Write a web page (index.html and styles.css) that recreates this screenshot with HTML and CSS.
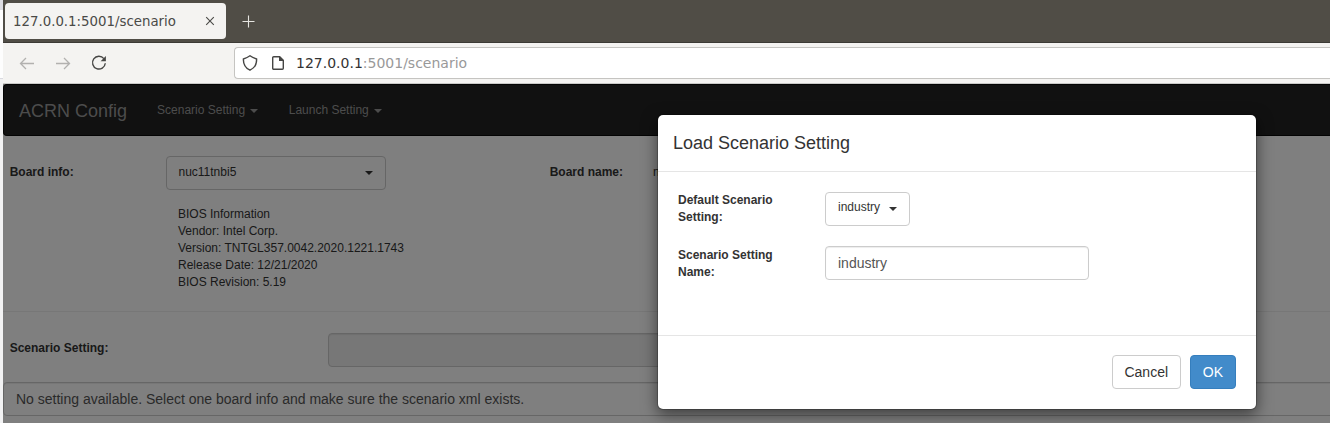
FILE: index.html
```html
<!DOCTYPE html>
<html lang="en">
<head>
<meta charset="utf-8">
<title>ACRN Config</title>
<link rel="stylesheet" href="styles.css">
</head>
<body>
<div class="screen">
  <div class="desktop-edge"></div>
  <div class="browser">
    <div class="tabs">
      <div class="tab"><span>127.0.0.1:5001/scenario</span>
        <svg class="tab-close" width="10" height="10" viewBox="0 0 10 10"><path d="M1.2 1.2l7.6 7.6M8.8 1.2L1.2 8.8"/></svg>
      </div>
      <svg class="new-tab" width="13" height="13" viewBox="0 0 13 13"><path d="M6.500 .5v12M.5 6.500h12"/></svg>
    </div>
    <div class="toolbar">
      <svg class="tool off" width="16" height="16" viewBox="0 0 16 16"><path d="M15 8.500H1.500M7 3L1.500 8.500L7 14"/></svg>
      <svg class="tool off" width="16" height="16" viewBox="0 0 16 16"><path d="M1 8.500H14.500M9 3L14.500 8.500L9 14"/></svg>
      <svg class="tool" width="16" height="16" viewBox="0 0 16 16"><path d="M12.9 3.6A6.4 6.4 0 1 0 14.3 8.3"/><path class="solid" d="M14.9 1v5.2H9.6z"/></svg>
      <div class="address">
        <svg class="tool" width="16" height="16" viewBox="0 0 16 16"><path d="M8 .8C6 2.300 4 3.200 1.400 4C1.200 9 3.500 13 8 15.200C12.500 13 14.800 9 14.600 4C12 3.200 10 2.300 8 .8z"/></svg>
        <svg class="tool" width="16" height="16" viewBox="0 0 16 16"><path d="M3.700 1.700h6l3.600 3.600v8a1 1 0 0 1-1 1H3.700a1 1 0 0 1-1-1v-10.600a1 1 0 0 1 1-1z"/><path class="solid" d="M9 1v5h5z"/></svg>
        <span class="url"><b>127.0.0.1</b>:5001/scenario</span>
      </div>
    </div>
    <main class="page">
      <nav class="navbar">
        <span class="brand">ACRN Config</span>
        <span class="nav-item">Scenario Setting<i class="caret"></i></span>
        <span class="nav-item">Launch Setting<i class="caret"></i></span>
      </nav>
      <section class="board">
        <label class="board-label">Board info:</label>
        <div class="board-value">
          <div class="select board-select"><span>nuc11tnbi5</span><i class="caret"></i></div>
          <div class="bios">BIOS Information<br>Vendor: Intel Corp.<br>Version: TNTGL357.0042.2020.1221.1743<br>Release Date: 12/21/2020<br>BIOS Revision: 5.19</div>
        </div>
        <label class="board-name">Board name:</label>
        <span class="name-value">nuc11tnbi5</span>
      </section>
      <section class="scenario">
        <label>Scenario Setting:</label>
        <div class="input readonly"></div>
      </section>
      <div class="input notice">No setting available. Select one board info and make sure the scenario xml exists.</div>
      <div class="backdrop"></div>
      <div class="modal">
        <h4 class="modal-title">Load Scenario Setting</h4>
        <div class="modal-body">
          <label>Default Scenario Setting:</label>
          <div class="select small-select"><span>industry</span><i class="caret"></i></div>
          <label class="name-label">Scenario Setting Name:</label>
          <div class="input name-input">industry</div>
        </div>
        <div class="modal-footer">
          <button class="btn cancel">Cancel</button>
          <button class="btn primary">OK</button>
        </div>
      </div>
    </main>
  </div>
</div>
</body>
</html>
```
FILE: styles.css
```css
* { box-sizing: border-box; }
body { margin: 0; overflow: hidden; }
.screen { width: 1330px; height: 423px; display: flex; overflow: hidden; }
.desktop-edge { width: 3px; flex: none; background: linear-gradient(#dcdce2 0 10px, #fdfdfd 10px 78px, #d9d9df 78px 79px, #f2f2f3 79px); }
.browser { width: 1327px; flex: none; display: flex; flex-direction: column; }

.tabs { height: 43px; flex: none; display: flex; align-items: flex-start; background: #504d46; border-bottom: 1px solid #3c3a35; padding: 3px 0 0 2px; font: 13.33px "DejaVu Sans", sans-serif; }
.tab { width: 221px; height: 36px; display: flex; align-items: center; justify-content: space-between; padding: 0 11px 0 8px; border-radius: 4px; background: #f4f3f1; color: #4a4a47; }
.tab-close, .new-tab { fill: none; stroke: #4a4a47; stroke-width: 1.1; }
.new-tab { margin: 12px 0 0 16px; stroke: #e6e5e1; stroke-width: 1.1; }

.toolbar { height: 41px; flex: none; display: flex; align-items: center; background: #f4f3f1; border-bottom: 1px solid #c9c9c7; padding-left: 16px; }
.tool { flex: none; fill: none; stroke: #464644; stroke-width: 1.4; margin-right: 20px; }
.tool.off { stroke: #b2b1af; stroke-width: 1.3; }
.solid { fill: #464644; stroke: none; }
.address { flex: 1; height: 32px; margin-left: 107px; display: flex; align-items: center; border: 1px solid #c5c4c1; border-right: 0; border-radius: 4px 0 0 4px; background: #fff; padding-left: 7px; }
.address .tool { margin-right: 12px; }
.url { font: 14px "DejaVu Sans", sans-serif; color: #999; margin-left: -2px; }
.url b { font-weight: 400; color: #333; }

.page { position: relative; height: 339px; overflow: hidden; background: #fff; font: 12px/17px "Liberation Sans", Arial, sans-serif; color: #333; }
.navbar { height: 52px; display: flex; align-items: center; background: #222; border: 1px solid #080808; border-right: 0; border-radius: 4px 0 0 4px; padding-left: 15px; color: #999; }
.brand { font-size: 18px; line-height: 20px; margin: 1px 30px 0 0; }
.nav-item { display: flex; align-items: center; margin: 0 30.600px 0 0; }
.caret { width: 0; height: 0; border: 4px solid transparent; border-top-color: currentColor; border-bottom: 0; margin: 2px 0 0 5px; }
label { font-weight: 700; }

.board { height: 176px; display: flex; padding: 20px 0 0 6.700px; border-bottom: 1px solid #eee; }
.board-label { width: 156.300px; padding-top: 8px; }
.board-value { width: 383.700px; }
.select { height: 34px; display: flex; align-items: flex-start; justify-content: space-between; border: 1px solid #ccc; border-radius: 4px; background: #fff; padding: 7px 12px; }
.select .caret { margin-top: 7px; }
.board-select { width: 220px; padding-left: 11.500px; }
.bios { padding: 16px 0 0 12px; }
.board-name { width: 103.300px; padding-top: 8px; }
.name-value { padding-top: 8px; }
.scenario { display: flex; height: 70px; padding: 21px 0 0 6.700px; }
.scenario label { width: 318.300px; padding-top: 7px; }
.input { height: 34px; border: 1px solid #ccc; border-radius: 4px; background: #fff; box-shadow: inset 0 1px 1px rgba(0,0,0,.075); padding: 6px 12px; font-size: 14px; line-height: 20px; color: #555; }
.readonly { width: 650px; background: #eee; }
.notice { width: 1340px; }

.backdrop { position: absolute; inset: 0; background: rgba(0,0,0,.5); }
.modal { position: absolute; left: 654px; top: 30px; width: 600px; height: 296px; background: #fff; background-clip: padding-box; border: 1px solid rgba(0,0,0,.2); border-radius: 6px; box-shadow: 0 5px 15px rgba(0,0,0,.5); }
.modal-title { height: 57px; margin: 0; padding: 18px 15px; border-bottom: 1px solid #e5e5e5; font-size: 18px; line-height: 20px; font-weight: 400; }
.modal-body { height: 163px; display: grid; grid-template-columns: 117px auto; grid-template-rows: 34px 34px; gap: 20px 30px; justify-content: start; padding: 20px; }
.name-label { padding-top: 1px; }
.small-select { width: 85px; padding-top: 6px; }
.small-select .caret { margin-top: 8px; }
.name-input { width: 264px; }
.modal-footer { height: 74px; display: flex; justify-content: flex-end; gap: 9px; border-top: 1px solid #e5e5e5; padding: 19px 20px; }
.btn { height: 34px; border: 1px solid #ccc; border-radius: 4px; padding: 0 12px; background: #fff; color: #333; font: 14px/20px "Liberation Sans", Arial, sans-serif; }
.cancel { width: 69px; padding: 0; }
.primary { background: #428bca; border-color: #357ebd; color: #fff; }
```
